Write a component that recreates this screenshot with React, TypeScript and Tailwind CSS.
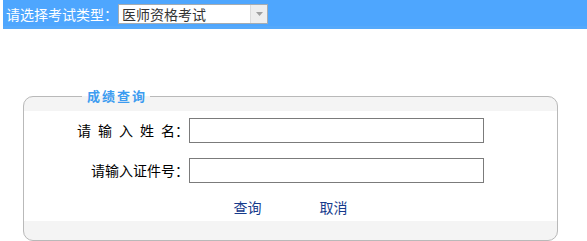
import { useState } from 'react';

// Exam score lookup panel: exam-type bar on top, then the query fieldset
export default function App() {
  const [name, setName] = useState('');
  const [idNo, setIdNo] = useState('');

  return (
    <div className="w-[587px] h-[241px] bg-white font-['Noto_Sans_CJK_SC',sans-serif] text-[14px] overflow-hidden">
      {/* exam type bar */}
      <div className="ml-[3px] h-[29px] bg-[#4ea6fe] border-b-[3px] border-[#55a9fb] flex items-start pt-[4px] pl-[3px]">
        <span className="text-white leading-[20px]">请选择考试类型：</span>
        <div className="w-[150px] h-[20px] border border-[#a5acb2] bg-white flex items-center">
          <span className="flex-1 pl-[3px] text-[#333] leading-[18px]">医师资格考试</span>
          <div className="w-[17px] h-[18px] bg-[#eeeeee] border-l border-[#dcdcdc] flex items-center justify-center">
            <svg width="7" height="4" viewBox="0 0 7 4">
              <path d="M0 0h7L3.5 4z" fill="#a0a0a0" />
            </svg>
          </div>
        </div>
      </div>

      {/* score query box */}
      <fieldset className="mt-[59px] ml-[23px] w-[535px] h-[153px] border border-[#b9b9b9] rounded-[10px] bg-[#f4f4f4]">
        <legend className="ml-[58px] pl-[5px] pr-[3px] text-[13px] leading-[16px] font-bold tracking-[2px] text-[#3d9cf0]">
          成绩查询
        </legend>
        <div className="mt-[7px] h-[110px] bg-white pt-[7px] flex flex-col">
          <div className="flex items-center">
            <label className="w-[165px] text-right text-black leading-[25px]">
              <span className="tracking-[7px]">请输入姓</span>名：
            </label>
            <input
              value={name}
              onChange={(e) => setName(e.target.value)}
              className="w-[295px] h-[25px] border border-[#7b7b7b] bg-white outline-none px-1"
            />
          </div>
          <div className="flex items-center mt-[15px]">
            <label className="w-[165px] text-right text-black leading-[25px]">请输入证件号：</label>
            <input
              value={idNo}
              onChange={(e) => setIdNo(e.target.value)}
              className="w-[295px] h-[25px] border border-[#7b7b7b] bg-white outline-none px-1"
            />
          </div>
          <div className="mt-[15px] flex justify-center gap-[58px] leading-[18px] text-[#163b8c]">
            <a className="cursor-pointer">查询</a>
            <a className="cursor-pointer">取消</a>
          </div>
        </div>
      </fieldset>
    </div>
  );
}
